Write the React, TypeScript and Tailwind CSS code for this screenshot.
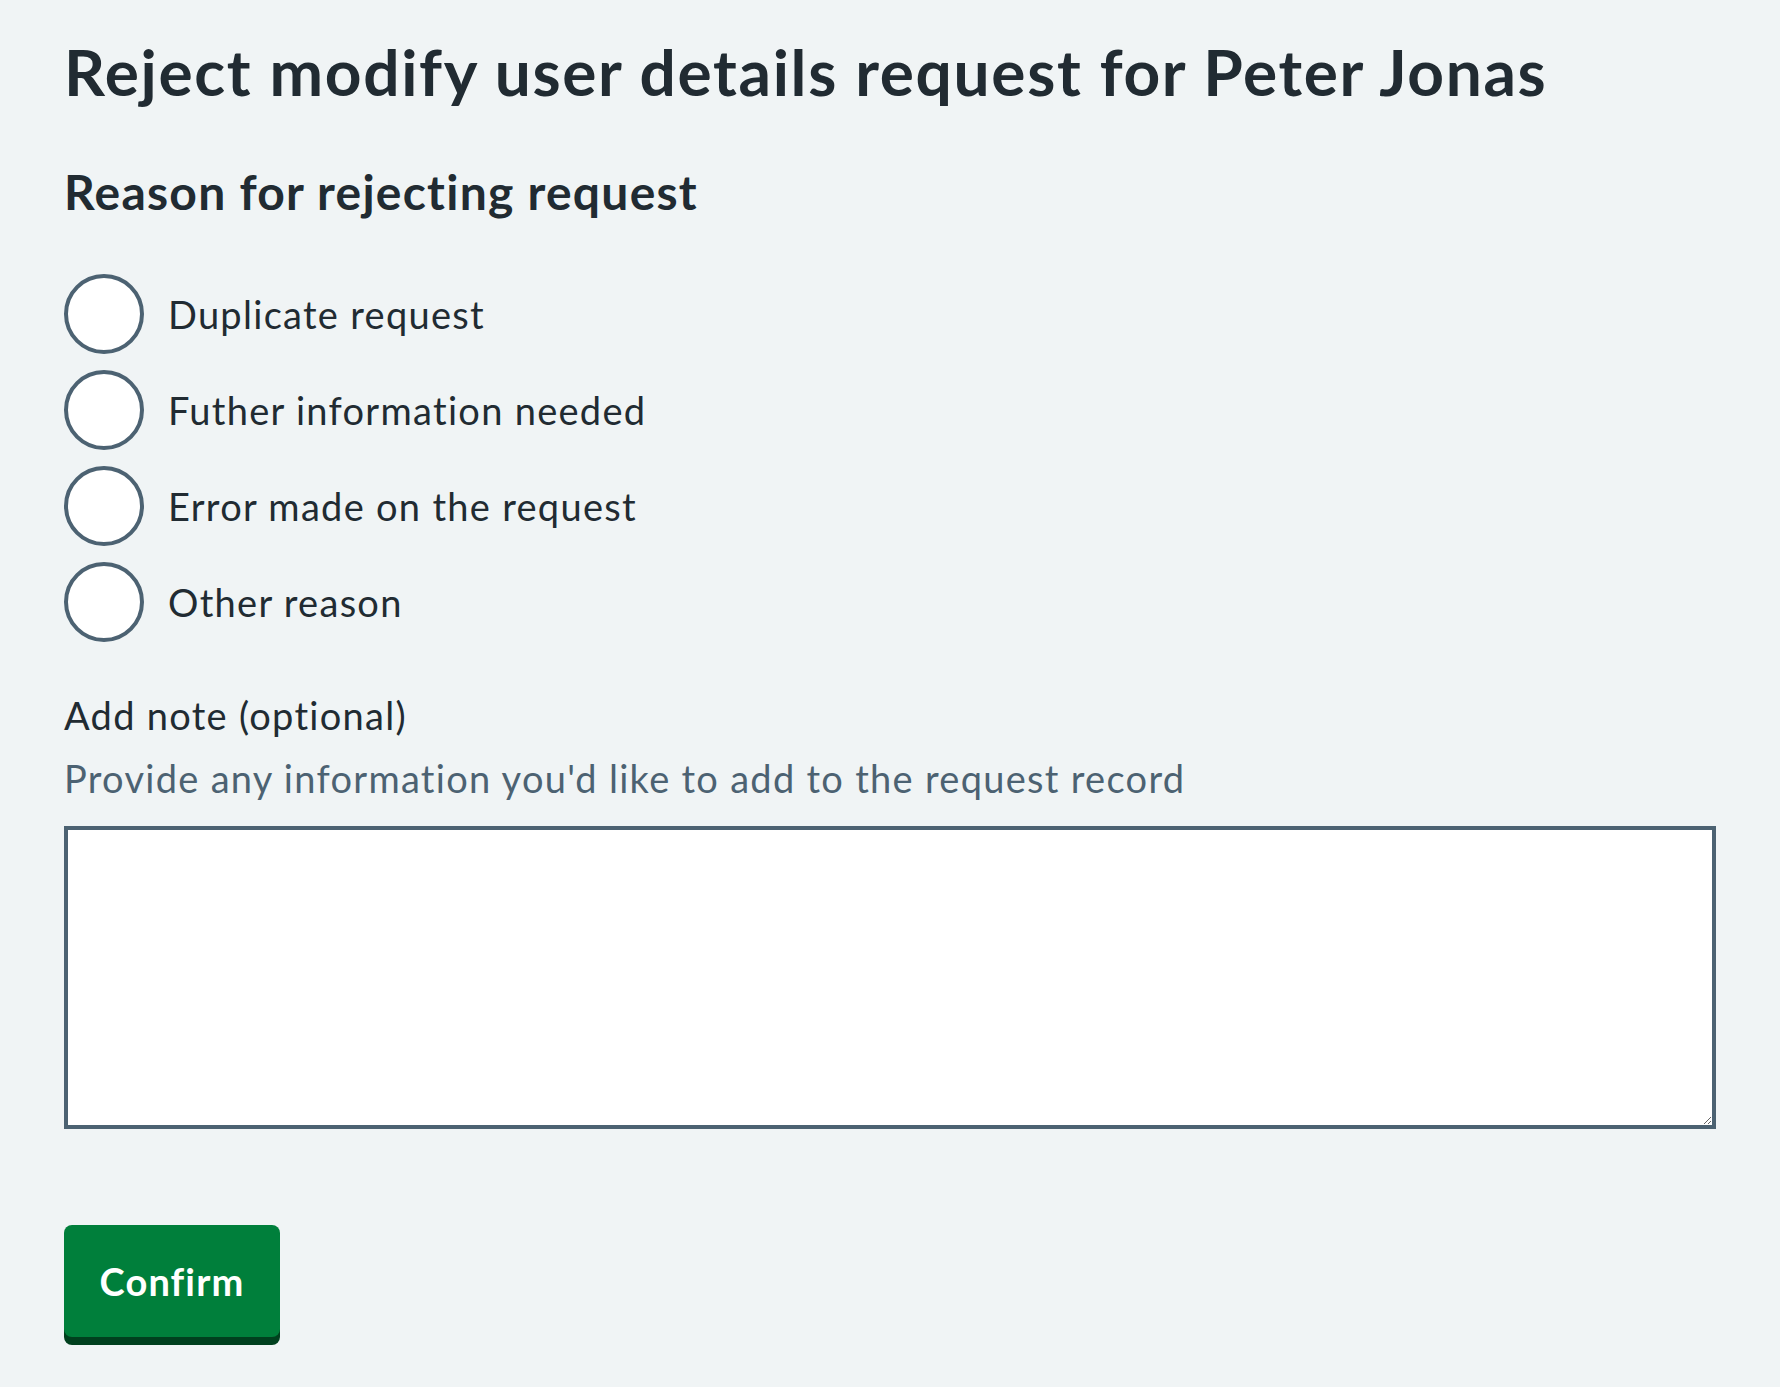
import React from "react";

const reasons = [
  "Duplicate request",
  "Futher information needed",
  "Error made on the request",
  "Other reason",
];

export default function App() {
  return (
    <div className="min-h-[1387px] bg-[#f0f4f5] px-[64px] pt-[32px] text-[#212b32] font-[Lato,sans-serif]">
      <h1 className="m-0 text-[64px] leading-[80px] font-bold tracking-[0.026em]">
        Reject modify user details request for Peter Jonas
      </h1>
      <div role="group">
        <div className="mt-[48px] text-[48px] leading-[64px] font-bold tracking-[0.026em]">
          Reason for rejecting request
        </div>
        <div className="mt-[50px] flex flex-col gap-[16px]">
          {reasons.map((r) => (
            <label key={r} className="flex h-[80px] items-center">
              <span className="h-[80px] w-[80px] shrink-0 rounded-full border-[4px] border-[#4c6272] bg-white" />
              <span className="ml-[24px] text-[38px] leading-[48px] tracking-[0.034em]">{r}</span>
            </label>
          ))}
        </div>
      </div>
      <div className="mt-[49px] text-[38px] leading-[48px] tracking-[0.034em]">Add note (optional)</div>
      <div className="mt-[15px] text-[38px] leading-[48px] tracking-[0.034em] text-[#4c6272]">
        Provide any information you'd like to add to the request record
      </div>
      <textarea className="mt-[24px] block h-[303px] w-full border-[4px] border-[#4c6272] bg-white" />
      <button className="mt-[96px] h-[112px] w-[216px] rounded-[8px] bg-[#007f3b] text-[38px] font-bold tracking-[0.03em] text-white shadow-[0_8px_0_#00401e]">
        Confirm
      </button>
    </div>
  );
}
